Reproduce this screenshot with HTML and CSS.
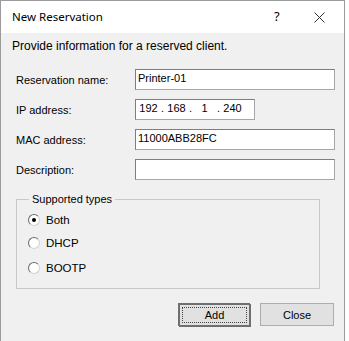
FILE: index.html
```html
<!DOCTYPE html>
<html>
<head>
<meta charset="utf-8">
<link rel="stylesheet" href="styles.css">
</head>
<body>
<div class="window">
  <div class="titlebar">
    <span class="title">New Reservation</span>
    <span class="help">?</span>
    <span class="close">
      <svg width="11" height="11" viewBox="0 0 11 11"><path d="M0.5 0.5 L10.5 10.5 M10.5 0.5 L0.5 10.5" stroke="#333" stroke-width="1" fill="none"/></svg>
    </span>
  </div>
  <div class="content">
    <div class="intro">Provide information for a reserved client.</div>
    <div class="form">
      <label class="lbl">Reservation name:</label>
      <div class="box">Printer-01</div>
      <label class="lbl">IP address:</label>
      <div class="box ip"><span class="oct">192</span><span class="dot">.</span><span class="oct">168</span><span class="dot">.</span><span class="oct">1</span><span class="dot">.</span><span class="oct">240</span></div>
      <label class="lbl">MAC address:</label>
      <div class="box">11000ABB28FC</div>
      <label class="lbl">Description:</label>
      <div class="box"></div>
    </div>
    <fieldset class="group">
      <legend class="legend">Supported types</legend>
      <div class="radio-row"><span class="radio checked"></span><span class="rlabel">Both</span></div>
      <div class="radio-row"><span class="radio"></span><span class="rlabel">DHCP</span></div>
      <div class="radio-row"><span class="radio"></span><span class="rlabel">BOOTP</span></div>
    </fieldset>
    <div class="buttons">
      <div class="btn default"><span class="focus">Add</span></div>
      <div class="btn">Close</div>
    </div>
  </div>
</div>
</body>
</html>
```
FILE: styles.css
```css
html, body {
  margin: 0;
  padding: 0;
  background: #ffffff;
}
body {
  font-family: "Liberation Sans", Arial, sans-serif;
  font-size: 11px;
  color: #000;
}
.window {
  width: 343px;
  height: 340px;
  border: 1px solid #9b9b9b;
  border-bottom: none;
  display: flex;
  flex-direction: column;
  background: #f0f0f0;
}
.titlebar {
  height: 32px;
  background: #ffffff;
  display: flex;
  align-items: center;
  padding-left: 11px;
  font-family: "Noto Sans", "Open Sans", sans-serif;
  font-size: 11.5px;
  color: #000;
}
.title {
  flex: 1;
  padding-bottom: 1px;
}
.help {
  width: 12px;
  font-size: 13px;
  margin-right: 28px;
  padding-bottom: 2px;
}
.close {
  display: flex;
  margin-right: 19px;
}
.content {
  flex: 1;
  padding: 6px 10px 0 11px;
  display: flex;
  flex-direction: column;
}
.intro {
  font-size: 12px;
  line-height: 15px;
}
.form {
  margin-top: 15px;
  display: grid;
  grid-template-columns: 123px 200px;
  row-gap: 9px;
  align-items: center;
}
.lbl {
  padding-left: 4px;
  padding-top: 1px;
}
.box {
  height: 19px;
  border: 1px solid #a6a6a6;
  border-top-color: #7e7e7e;
  border-left-color: #7e7e7e;
  background: #fff;
  line-height: 17px;
  padding-left: 2px;
  box-sizing: content-box;
}
.box.ip {
  width: 115px;
  padding-left: 3px;
  display: flex;
}
.oct { display: inline-block; width: 19px; text-align: center; }
.dot { display: inline-block; width: 9px; text-align: center; }
.group {
  margin: 12px 0 0 4px;
  width: 304px;
  height: 97px;
  border: 1px solid #c9c9c9;
  padding: 6px 0 0 11px;
  box-sizing: border-box;
  min-width: 0;
}
.legend {
  padding: 0 3px;
  margin-left: 1px;
  line-height: 14px;
}
.radio-row {
  display: flex;
  align-items: center;
  height: 15px;
  margin-bottom: 8px;
}
.radio-row:nth-of-type(2) { margin-bottom: 10px; }
.radio {
  width: 10px;
  height: 10px;
  border-radius: 50%;
  border: 1px solid #d2d2d2;
  border-top-color: #6a6a6a;
  border-left-color: #6a6a6a;
  background: #fff;
  position: relative;
  margin-right: 6px;
}
.radio.checked::after {
  content: "";
  position: absolute;
  left: 3px;
  top: 3px;
  width: 4px;
  height: 4px;
  border-radius: 50%;
  background: #000;
}
.rlabel {
  font-size: 11.5px;
  padding-top: 1px;
}
.buttons {
  margin-top: 14px;
  display: flex;
  justify-content: flex-end;
  gap: 10px;
}
.btn {
  width: 72px;
  height: 21px;
  border: 1px solid #adadad;
  background: #e1e1e1;
  display: flex;
  align-items: center;
  justify-content: center;
}
.btn.default {
  width: 69px;
  height: 20px;
  border: 2px solid #6f6f6f;
  border-bottom-width: 1px;
  border-right-width: 1px;
  box-shadow: 1px 1px 0 #6f6f6f;
}
.focus {
  width: 63px;
  height: 14px;
  border: 1px dotted #444;
  line-height: 14px;
  text-align: center;
}
```
